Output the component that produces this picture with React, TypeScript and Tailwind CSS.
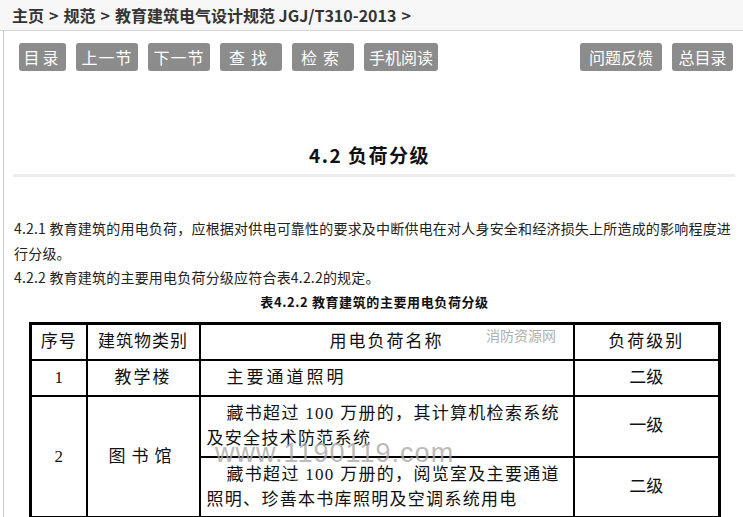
import React from "react";

const buttonsLeft = [
  { label: "目录", w: "w-[47px]", track: "tracking-[3px]" },
  { label: "上一节", w: "w-[62px]", track: "tracking-[1px]" },
  { label: "下一节", w: "w-[62px]", track: "tracking-[1px]" },
  { label: "查找", w: "w-[62px]", track: "tracking-[6px]" },
  { label: "检索", w: "w-[62px]", track: "tracking-[6px]" },
  { label: "手机阅读", w: "w-[74px]", track: "tracking-[0px]" },
];

function NavButton({ label, w, track }: { label: string; w: string; track: string }) {
  return (
    <div
      className={`${w} h-[28px] rounded-[3px] bg-[#8c8c8c] text-white text-[16px] flex items-center justify-center`}
    >
      <span className={track}>{label}</span>
    </div>
  );
}

export default function App() {
  return (
    <div className="w-[743px] h-[517px] overflow-hidden bg-white font-['Noto_Sans_CJK_SC',sans-serif] text-[#333]">
      {/* 面包屑 */}
      <div className="h-[31px] bg-[#f7f7f7] border-b border-[#d4d4d4] pl-[12px] flex items-center gap-[5px] text-[16px] font-bold text-[#333]">
        <span>主页</span>
        <span>&gt;</span>
        <span>规范</span>
        <span>&gt;</span>
        <span>教育建筑电气设计规范 JGJ/T310-2013</span>
        <span>&gt;</span>
      </div>

      <div className="ml-[3px] border-l border-[#cccccc] h-[486px] pr-[8px]">
        {/* 按钮 */}
        <div className="flex justify-between pt-[12px] pl-[15px] pr-[2px]">
          <div className="flex gap-[10px]">
            {buttonsLeft.map((b) => (
              <NavButton key={b.label} {...b} />
            ))}
          </div>
          <div className="flex gap-[10px]">
            <NavButton label="问题反馈" w="w-[82px]" track="tracking-[0px]" />
            <NavButton label="总目录" w="w-[61px]" track="tracking-[0px]" />
          </div>
        </div>

        {/* 标题 */}
        <h1 className="mt-[72px] h-[24px] leading-[24px] text-center text-[19px] font-bold tracking-[1.5px] text-[#111]">
          4.2 负荷分级
        </h1>
        <div className="mt-[7px] ml-[9px] h-[3px] bg-[#ececec]"></div>

        {/* 正文 */}
        <div className="mt-[39px] pl-[10px] text-[14px] leading-[24.5px] tracking-[0.2px] text-[#222]">
          <p>
            4.2.1 教育建筑的用电负荷，应根据对供电可靠性的要求及中断供电在对人身安全和经济损失上所造成的影响程度进行分级。
          </p>
          <p>4.2.2 教育建筑的主要用电负荷分级应符合表4.2.2的规定。</p>
          <p className="text-center text-[13px] font-bold tracking-[0.6px] text-[#111]">
            表4.2.2 教育建筑的主要用电负荷分级
          </p>
        </div>

        {/* 表格 */}
        <div className="relative mt-[8px] ml-[25px] w-[689px] font-['Liberation_Serif','Noto_Sans_CJK_SC',serif] text-[17px] text-[#111]">
          <table className="w-full table-fixed border-collapse border-[3px] border-black">
            <colgroup>
              <col className="w-[56px]" />
              <col className="w-[113px]" />
              <col className="w-[374px]" />
              <col className="w-[146px]" />
            </colgroup>
            <tbody>
              <tr className="h-[36px]">
                <td className="border-2 border-black text-center tracking-[1px]">序号</td>
                <td className="border-2 border-black text-center tracking-[1px]">建筑物类别</td>
                <td className="border-2 border-black text-center tracking-[2px]">用电负荷名称</td>
                <td className="border-2 border-black text-center tracking-[2px]">负荷级别</td>
              </tr>
              <tr className="h-[36px]">
                <td className="border-2 border-black text-center">1</td>
                <td className="border-2 border-black text-center tracking-[2px]">教学楼</td>
                <td className="border-2 border-black pl-[26px] tracking-[3px]">主要通道照明</td>
                <td className="border-2 border-black text-center">二级</td>
              </tr>
              <tr className="h-[61px]">
                <td rowSpan={2} className="border-2 border-black text-center">2</td>
                <td rowSpan={2} className="border-2 border-black text-center tracking-[6px]">图书馆</td>
                <td className="border-2 border-black pl-[6px] leading-[25px] tracking-[1.3px] whitespace-nowrap">
                  <span className="pl-[20px]">藏书超过 100 万册的，其计算机检索系统</span>
                  <br />
                  及安全技术防范系统
                </td>
                <td className="border-2 border-black text-center">一级</td>
              </tr>
              <tr className="h-[61px]">
                <td className="border-2 border-black pl-[6px] leading-[25px] tracking-[1.3px] whitespace-nowrap">
                  <span className="pl-[20px]">藏书超过 100 万册的，阅览室及主要通道</span>
                  <br />
                  照明、珍善本书库照明及空调系统用电
                </td>
                <td className="border-2 border-black text-center">二级</td>
              </tr>
            </tbody>
          </table>

          {/* 水印 */}
          <span className="absolute left-[457px] top-[3px] font-['Noto_Sans_CJK_SC',sans-serif] text-[14px] text-[#b0b0b0]">
            消防资源网
          </span>
          <span className="absolute left-[186px] top-[111px] font-['Liberation_Sans',sans-serif] text-[27px] tracking-[1px] text-[#a8a8a8]/80">
            www.1190119.com
          </span>
        </div>
      </div>
    </div>
  );
}
